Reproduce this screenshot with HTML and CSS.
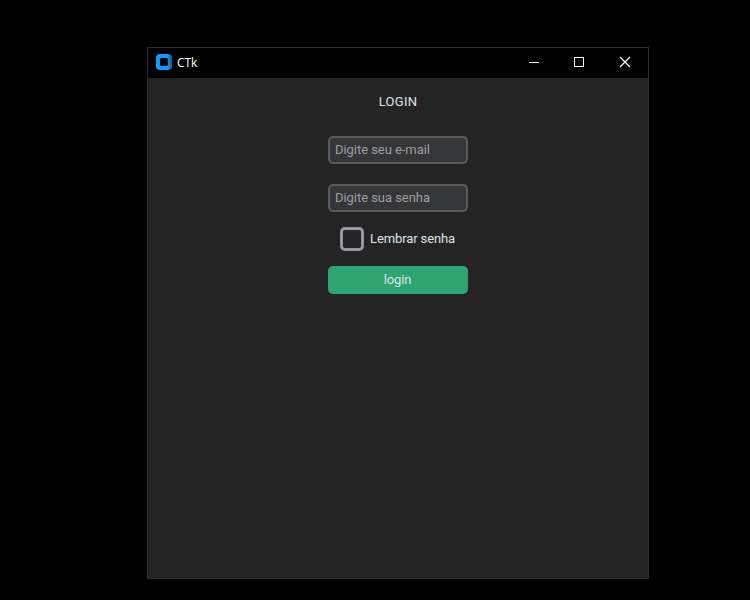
FILE: index.html
```html
<!DOCTYPE html>
<html lang="pt-BR">
<head>
<meta charset="utf-8">
<title>CTk</title>
<link rel="stylesheet" href="styles.css">
</head>
<body>
<main class="window">
  <header class="titlebar">
    <svg class="logo" width="16" height="16" viewBox="0 0 16 16"><defs><linearGradient id="shade"><stop offset=".74" stop-color="#0a9cff"/><stop offset=".92" stop-color="#0767b3"/></linearGradient></defs><rect width="16" height="16" rx="4" fill="url(#shade)"/><rect x="4" y="4" width="8" height="8" rx="1.500" fill="#000"/></svg>
    <span class="title">CTk</span>
    <div class="controls">
      <svg width="46" height="30" viewBox="0 0 46 30"><path d="M18 14.500h10" stroke="#fff"/></svg>
      <svg width="45" height="30" viewBox="0 0 45 30"><rect x="17.500" y="9.500" width="9" height="9" fill="none" stroke="#fff"/></svg>
      <svg width="46" height="30" viewBox="0 0 46 30"><path d="M18 9l10 10M28 9l-10 10" stroke="#fff" stroke-width="1.200"/></svg>
    </div>
  </header>
  <form class="form">
    <h1 class="heading">LOGIN</h1>
    <input class="field" type="email" placeholder="Digite seu e-mail">
    <input class="field" type="password" placeholder="Digite sua senha">
    <label class="remember"><input class="check" type="checkbox"><span class="label">Lembrar senha</span></label>
    <button class="submit" type="button">login</button>
  </form>
</main>
</body>
</html>
```

FILE: styles.css
```css
* { box-sizing: border-box; }
body { display: flow-root; margin: 0; height: 600px; overflow: hidden; background: #000; font: 13px Roboto, sans-serif; }
.window { width: 502px; height: 532px; margin: 47px 0 0 147px; border: 1px solid #2b2b2b; background: #242424; }
.titlebar { height: 30px; display: flex; align-items: center; background: #000; padding-left: 8px; }
.logo { margin-right: 5px; margin-top: -2px; }
.title { color: #fff; font: 12px "Open Sans", sans-serif; letter-spacing: -.1px; margin-top: -2px; }
.controls { display: flex; margin-left: auto; }
.form { display: flex; flex-direction: column; align-items: center; }
.heading { margin: 10px 0 20px; height: 28px; font-size: 13px; font-weight: 400; line-height: 28px; letter-spacing: .25px; color: #dce4ee; }
.field { width: 140px; height: 28px; margin: 0 0 20px; padding: 0 5px 2px; border: 2px solid #565b5e; border-radius: 5px; background: #343638; color: #dce4ee; font: 13px Roboto, sans-serif; letter-spacing: -.05px; }
.field::placeholder { color: #9e9e9e; opacity: 1; }
.remember { display: flex; align-items: center; gap: 6px; width: 116px; height: 24px; margin: -5px 0 15px; color: #dce4ee; letter-spacing: -.11px; white-space: nowrap; }
.label { padding-bottom: 2px; }
.check { appearance: none; width: 24px; height: 24px; margin: 0; border: 3px solid #949a9f; border-radius: 5px; }
.submit { width: 140px; height: 28px; border: 0; border-radius: 5px; background: #2fa572; color: #dce4ee; font: 13px Roboto, sans-serif; letter-spacing: -.1px; padding: 0 1px 2px 0; }
```
